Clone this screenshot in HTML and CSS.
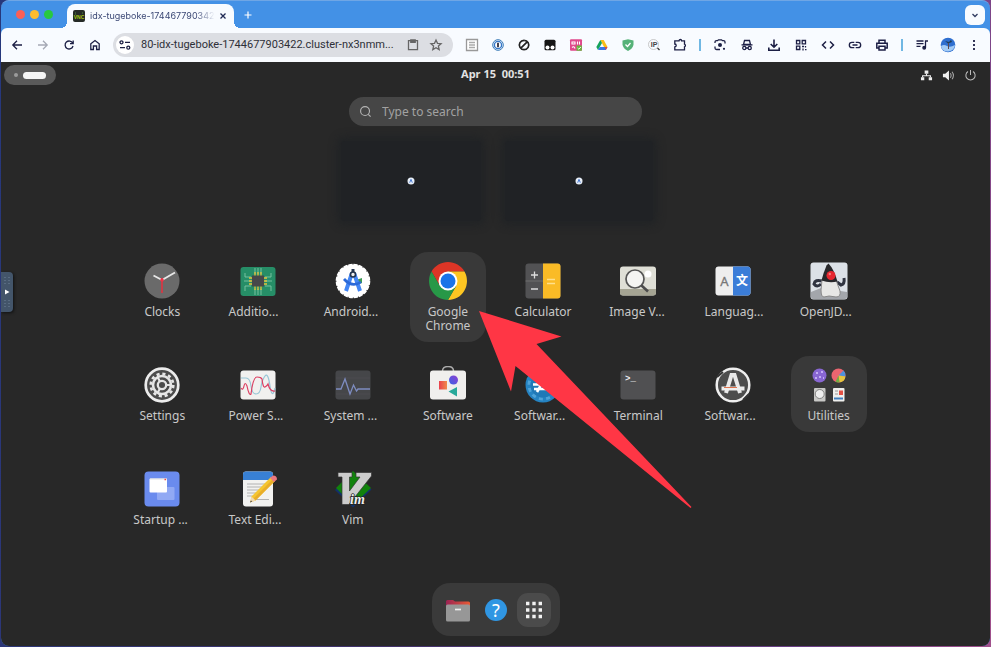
FILE: index.html
```html
<!DOCTYPE html>
<html lang="en">
<head>
<meta charset="utf-8">
<title>idx-tugeboke-1744677903422</title>
<link rel="stylesheet" href="styles.css">
</head>
<body>
<div class="window">
  <header class="tabstrip">
    <div class="lights"><i class="red"></i><i class="amber"></i><i class="green"></i></div>
    <div class="tab">
      <svg class="favicon" viewBox="0 0 12 12"><rect width="12" height="12" rx="2" fill="#252a26"/><path d="M2.500 2v3M9.500 2v2" stroke="#3a5a35" stroke-width="1"/><text x="6" y="8.500" text-anchor="middle" font-family="Liberation Sans" font-weight="bold" font-size="5" fill="#a9c713">VNC</text></svg>
      <span class="tab-title">idx-tugeboke-174467790342</span>
      <button class="tab-btn" aria-label="Close tab"><svg viewBox="0 0 10 10"><path d="M2.500 2.500l5 5M7.500 2.500l-5 5" stroke="#202a55" stroke-width="1.300"/></svg></button>
    </div>
    <button class="tab-btn new" aria-label="New tab"><svg viewBox="0 0 10 10"><path d="M5 1.500v7M1.500 5h7" stroke="#fff" stroke-width="1.200"/></svg></button>
    <button class="tab-search" aria-label="Search tabs"><svg viewBox="0 0 10 10"><path d="M2.500 4l2.500 2.500L7.500 4" fill="none" stroke="#303a60" stroke-width="1.300"/></svg></button>
  </header>

  <nav class="toolbar">
    <div class="group">
      <button aria-label="Back"><svg viewBox="0 0 16 16"><path d="M13 8H4M8 3.800L3.800 8 8 12.200"/></svg></button>
      <button aria-label="Forward" class="dim"><svg viewBox="0 0 16 16"><path d="M3 8h9M8 3.800L12.200 8 8 12.200"/></svg></button>
      <button aria-label="Reload"><svg viewBox="0 0 16 16"><path d="M11.700 6.200A4 4 0 1 0 12 9M12.200 3.500v3.200H9"/></svg></button>
      <button aria-label="Home"><svg viewBox="0 0 16 16"><path d="M3.800 12.500V6.800L8 3.500l4.200 3.300v5.700H9.600V9H6.400v3.500z"/></svg></button>
    </div>
    <div class="address">
      <button class="site" aria-label="Site information"><svg viewBox="0 0 16 16"><circle cx="4.500" cy="5.300" r="1.500"/><path d="M8 5.300h5M3 10.700h5"/><circle cx="11.300" cy="10.700" r="1.500"/></svg></button>
      <input class="url" aria-label="Address" value="80-idx-tugeboke-1744677903422.cluster-nx3nmm...">
      <button class="grey" aria-label="Clipboard"><svg viewBox="0 0 16 16"><path d="M3.500 3.700h9v9h-9z"/><path d="M5.800 3h4.400v2.400H5.800z" fill="#666"/></svg></button>
      <button class="grey" aria-label="Bookmark"><svg viewBox="0 0 16 16"><path d="M8 3l1.500 3.300 3.600.400-2.700 2.400.800 3.500L8 10.800l-3.200 1.800.800-3.500-2.700-2.400 3.600-.400z"/></svg></button>
    </div>
    <div class="group ext">
      <button aria-label="Reader"><svg viewBox="0 0 16 16"><path d="M2.500 2.500h11v11h-11z" stroke="#999" fill="#fff"/><path d="M5 5.500h6M5 8h6M5 10.500h6" stroke="#aaa"/></svg></button>
      <button aria-label="Password manager"><svg viewBox="0 0 16 16"><circle cx="8" cy="8" r="5.300" stroke="#3477b5" fill="#fff" stroke-width="1"/><circle cx="8" cy="8" r="3.600" stroke="#3477c9" stroke-width="1.400"/><path d="M8 5.800v4.400" stroke="#223" stroke-width="1.700"/></svg></button>
      <button aria-label="Blocker"><svg viewBox="0 0 16 16"><path d="M8 3.300a4.700 4.700 0 1 0 .1 0M4.800 11.200l6.400-6.400" stroke="#222" stroke-width="1.700"/></svg></button>
      <button aria-label="Tampermonkey"><svg viewBox="0 0 16 16"><rect x="2.500" y="2.800" width="11" height="10.500" rx="1.500" fill="#161616" stroke="none"/><circle cx="5.500" cy="10.500" r="2" fill="#fff" stroke="none"/><circle cx="10.500" cy="10.500" r="2" fill="#fff" stroke="none"/></svg></button>
      <button aria-label="Translator"><svg viewBox="0 0 16 16"><rect x="2" y="2.300" width="12" height="11.500" rx="1" fill="#e0488c" stroke="none"/><path d="M4 5h3v2H4zM9.500 4.500v3M11.500 4.500v3M4 10.500q2-2 3 1" stroke="#fff" stroke-width="1.100"/><path d="M8.500 8.500h5.300v5.200H8.500z" fill="#67b83f" stroke="none"/><path d="M9.600 11l1.200 1.200L12.800 10" stroke="#fff" stroke-width="1"/></svg></button>
      <button aria-label="Drive"><svg viewBox="0 0 16 16" class="solid"><path d="M6.300 3h3.400L13.500 10H10z" fill="#f9bd18"/><path d="M6.300 3L8 6l-4 7-1.700-3z" fill="#15a25c"/><path d="M5.700 10h7.800l-1.700 3H4z" fill="#3878e8"/><path d="M10.800 10h2.700l-1.700 3z" fill="#e64639"/></svg></button>
      <button aria-label="Shield"><svg viewBox="0 0 16 16"><path d="M8 2.300l5.500 1.300v4.200Q12.500 12 8 14 3.500 12 2.500 7.800V3.600z" fill="#56b278" stroke="none"/><path d="M5.500 7.500L7.500 9.500l3-3.500" stroke="#fff" stroke-width="1.300"/></svg></button>
      <button aria-label="IP lookup"><svg viewBox="0 0 16 16"><circle cx="7.500" cy="7.500" r="5" stroke="#bbb" stroke-width=".8"/><text class="ip" x="8" y="10" text-anchor="middle" font-family="Liberation Sans" font-weight="bold" font-size="7">IP</text><path d="M11.500 11l2 2" stroke="#333"/></svg></button>
      <button aria-label="Extensions"><svg viewBox="0 0 16 16"><path d="M2.800 3.800H7a1.300 1.300 0 0 1 2.600 0h2.900v3.400a1.400 1.400 0 0 1 0 2.600v3.100H2.800V9.800a1.400 1.400 0 0 0 0-2.800z"/></svg></button>
    </div>
    <span class="sep"></span>
    <div class="group tools">
      <button aria-label="Lens"><svg viewBox="0 0 16 16"><path d="M3 6V5q0-1.300 1.500-1.300h1L6.500 2.800h3l1 .900h1Q13 3.700 13 5v1.500M3 9.500V11q0 1.500 1.500 1.500H8"/><circle cx="8" cy="8" r="2" fill="#1c1f45" stroke="none"/><circle cx="12" cy="11.800" r="1.100" fill="#1c1f45" stroke="none"/></svg></button>
      <button aria-label="Incognito"><svg viewBox="0 0 16 16"><path d="M5.500 3.500h5l1 4h-7z"/><path d="M2.500 7.800h11M7 11h2"/><circle cx="5.300" cy="11" r="1.600"/><circle cx="10.700" cy="11" r="1.600"/></svg></button>
      <button aria-label="Downloads"><svg viewBox="0 0 16 16"><path d="M8 2.500v7.300M4.700 7L8 10.200 11.300 7M2.800 10.500V13.300h10.400v-2.800" stroke-width="1.600"/></svg></button>
      <button aria-label="QR code"><svg viewBox="0 0 16 16"><path d="M3.500 3.500h3.300v3.300H3.500zM9.200 3.500h3.300v3.300H9.200zM3.500 9.200h3.300v3.300H3.500z"/><path d="M9 9.500h2M12.500 9v1.500M10 11.500v2M12 12.700h1.500"/></svg></button>
      <button aria-label="Developer tools"><svg viewBox="0 0 16 16"><path d="M6 4.500L2.500 8 6 11.500M10 4.500L13.500 8 10 11.500" stroke-width="1.500"/></svg></button>
      <button aria-label="Copy link"><svg viewBox="0 0 16 16"><path d="M7.300 5.300H5a2.700 2.700 0 0 0 0 5.400h2.300M8.700 5.300H11a2.700 2.700 0 0 1 0 5.400H8.700M5.500 8h5"/></svg></button>
      <button aria-label="Print"><svg viewBox="0 0 16 16"><path d="M5 6V3.200h6V6M5 11H2.800V6.300h10.400V11H11M5 9.300h6v3.700H5z" stroke-width="1.500"/></svg></button>
    </div>
    <span class="sep"></span>
    <div class="group end">
      <button aria-label="Media"><svg viewBox="0 0 16 16"><path d="M2.500 4h7M2.500 6.700h7M2.500 9.400h4M11.500 10.500V4H14"/><circle cx="10.200" cy="10.800" r="1.300" fill="#1c1f45"/></svg></button>
      <button aria-label="Profile"><svg viewBox="0 0 16 16" class="solid"><circle cx="8" cy="8" r="7.300" fill="#2f6fd0"/><path d="M1 9q3-2 6 0t8-1A7.300 7.300 0 0 1 1.500 11z" fill="#a3cbf5"/><path d="M5 4l4 1 2-2 1 2-4 1.500z" fill="#1f3d55"/><path d="M8 6h1v6H8z" fill="#5b4a50"/></svg></button>
      <button aria-label="Menu"><svg viewBox="0 0 16 16"><path d="M8 3v2M8 7v2M8 11v2" stroke-width="1.800"/></svg></button>
    </div>
  </nav>

  <main class="desktop">
    <div class="topbar">
      <button class="activities" aria-label="Activities"><i></i><b></b></button>
      <time>Apr 15&nbsp; 00:51</time>
      <div class="status">
        <svg viewBox="0 0 14 14"><path d="M5 1.500h4v3.500H5zM1 9h3.600v3H1zM9.400 9H13v3H9.400z" fill="#eee"/><path d="M7 5v2.200M2.800 9V7.200h8.400V9" fill="none" stroke="#eee" stroke-width="1.200"/></svg>
        <svg viewBox="0 0 14 14"><path d="M1 5h2.500L7.500 1.500v11L3.500 9H1z" fill="#eee"/><path d="M9 4.500q1.600 2.500 0 5M10.800 3q3 4 0 8" fill="none" stroke="#aaa" stroke-width="1.100"/></svg>
        <svg viewBox="0 0 14 14"><path d="M4.300 2.700a5 5 0 1 0 5.400 0M7 1v5.500" fill="none" stroke="#bbb" stroke-width="1.100"/></svg>
      </div>
    </div>

    <label class="search">
      <svg viewBox="0 0 14 14"><circle cx="6.500" cy="6.500" r="4.800"/><path d="M10 10l2.500 2.500"/></svg>
      <input type="text" placeholder="Type to search" aria-label="Search">
    </label>

    <div class="workspaces">
      <div class="space"><svg viewBox="0 0 8 8"><circle cx="4" cy="4" r="3.500" fill="#e7eef8"/><path d="M2.700 5.700L4 2.300l1.300 3.400" fill="none" stroke="#4b7bd0"/></svg></div>
      <div class="space"><svg viewBox="0 0 8 8"><circle cx="4" cy="4" r="3.500" fill="#e7eef8"/><path d="M2.700 5.700L4 2.300l1.300 3.400" fill="none" stroke="#4b7bd0"/></svg></div>
    </div>

    <div class="apps">
      <button class="app"><svg viewBox="0 0 38 38"><circle cx="19" cy="19" r="17.500" fill="#6a6a6a"/><path d="M19 18l13-7.500M19 18l-8.500-4.500" stroke="#e8e8e8" stroke-width="1.900"/><path d="M19 16v15" stroke="#d93743" stroke-width="1.700"/><circle cx="19" cy="18" r="1.800" fill="#ee3347"/></svg><span>Clocks</span></button>
      <button class="app cut"><svg viewBox="0 0 38 38"><rect x="1.500" y="5" width="35" height="29" rx="3" fill="#268e67"/><path d="M16 6v6M19 6v6M22 6v6M16 27v6M19 27v6M22 27v6M6 11v4h6M5 19h7M6 29v-5h6M32 11v4h-6M33 19h-7M32 29v-5h-6" fill="none" stroke="#7fc6a5" stroke-width=".9"/><path d="M16 10v18M19 10v18M22 10v18M10 16h18M10 19h18M10 22h18" stroke="#e4c23c" stroke-width="1.300"/><rect x="13" y="13.500" width="12" height="11" fill="#47484a"/></svg><span>Additio...</span></button>
      <button class="app cut"><svg viewBox="0 0 38 38"><circle cx="19" cy="19" r="16.500" fill="#fff"/><circle cx="19" cy="19" r="16.300" fill="none" stroke="#fff" stroke-width="2" stroke-dasharray="4.100 1.020"/><path d="M22 18l6-2v5l-3 1z" fill="#3c9a54"/><path d="M18 11l-6 18M20 11l6 18" stroke="#4285f4" stroke-width="4"/><path d="M10 17q8 9 17 3" fill="none" stroke="#2b69d8" stroke-width="2.700"/><circle cx="19" cy="12.500" r="2.500" fill="#eee" stroke="#23344d" stroke-width="1.600"/><path d="M19 7v3" stroke="#23344d" stroke-width="3"/></svg><span>Android...</span></button>
      <div class="slot">
        <button class="app tile"><svg viewBox="0 0 38 38"><path d="M2.550 9.500A19 19 0 0 1 35.450 9.500H19L10.770 23.750z" fill="#dc3526"/><path d="M35.450 9.500A19 19 0 0 1 19 38L27.230 23.750 19 9.500z" fill="#fdc622"/><path d="M19 38A19 19 0 0 1 2.550 9.500L10.770 23.750H27.230z" fill="#279847"/><circle cx="19" cy="19" r="9.500" fill="#fff"/><circle cx="19" cy="19" r="7.500" fill="#1a73e8"/></svg><span>Google Chrome</span></button>
        <svg class="arrow" viewBox="0 0 214 198"><path d="M1 1l82.500 25.500L58.500 34l155 163-1 1L37.500 56 33 81.500z" fill="#ff3645"/></svg>
      </div>
      <button class="app"><svg viewBox="0 0 38 38"><rect x="1.500" y="1.500" width="35" height="35" rx="3" fill="#525254"/><path d="M19 1.500h14.500a3 3 0 0 1 3 3v29a3 3 0 0 1-3 3H19z" fill="#fabb26"/><path d="M1.500 19H19" stroke="#777" stroke-width=".8"/><path d="M10.500 9.500v7M7 13h7M7 27h7" stroke="#ddd" stroke-width="1.300"/><path d="M23 17.500h8M23 21.500h8" stroke="#ffe08c" stroke-width="1.400"/></svg><span>Calculator</span></button>
      <button class="app cut"><svg viewBox="0 0 38 38"><rect x="1" y="4.500" width="36" height="29" rx="3" fill="#dfdfd6"/><path d="M1 27h36v3.500a3 3 0 0 1-3 3H4a3 3 0 0 1-3-3z" fill="#a5a493"/><circle cx="29" cy="12" r="3.500" fill="#fff"/><circle cx="16" cy="17" r="9" fill="#f4f4f2" stroke="#555" stroke-width="1.700"/><path d="M22.500 23.500l6.500 6" stroke="#4b4b4b" stroke-width="2.600"/></svg><span>Image V...</span></button>
      <button class="app cut"><svg viewBox="0 0 38 38"><rect x="1.500" y="4.500" width="35" height="29" rx="3" fill="#eee"/><path d="M19 4.500h14.500a3 3 0 0 1 3 3v23a3 3 0 0 1-3 3H19z" fill="#3b7dd8"/><text x="10.500" y="24" text-anchor="middle" font-family="Noto Sans" font-size="13" fill="#777" stroke="#777" stroke-width=".3">A</text><text x="28" y="23" text-anchor="middle" font-family="Noto Sans CJK SC" font-size="12" font-weight="bold" fill="#fff">文</text></svg><span>Languag...</span></button>
      <button class="app cut"><svg viewBox="0 0 38 38"><rect x=".5" y=".5" width="37" height="37" rx="3" fill="#dce1e7"/><path d="M1 30l10-4 26 4v5q0 2-2 2H3q-2 0-2-2z" fill="#a3a6ab"/><path d="M12 19q-7-2-8 3 3 4 7 0M27 20l4 3q4-1 3-7" fill="none" stroke="#2f3340" stroke-width="3"/><path d="M12 18L11 28q0 7 3 7l5-1 7 1q5 0 4-6l-4-11z" fill="#e7e7e5" stroke="#888"/><path d="M18.500 1.500q5 5 9 18-8 2-16-1 2-8 5-15z" fill="#28282b"/><circle cx="21" cy="13.500" r="4.500" fill="#e62630"/><circle cx="19.800" cy="12" r="1.200" fill="#f37b7b"/></svg><span>OpenJD...</span></button>

      <button class="app"><svg viewBox="0 0 38 38"><circle cx="19" cy="19" r="16.300" fill="#4c4c4c" stroke="#ececec" stroke-width="2.700"/><circle cx="19" cy="19" r="11.300" fill="none" stroke="#e6e6e6" stroke-width="2.600" stroke-dasharray="3.100 2.817"/><circle cx="19" cy="19" r="9" fill="none" stroke="#e6e6e6" stroke-width="2.600"/><circle cx="19" cy="19" r="4.200" fill="none" stroke="#e6e6e6" stroke-width="2.300"/><path d="M23 19h5M17 22.500l-2.500 4.500M17 15.500L14.500 11" stroke="#e6e6e6" stroke-width="2.200"/></svg><span>Settings</span></button>
      <button class="app cut"><svg viewBox="0 0 38 38"><rect x="1.500" y="4.500" width="35" height="29" rx="3" fill="#f1f0ef"/><path d="M2 12h5q4 0 5 8t5 8 5-7 4-11 5 10 5 2" fill="none" stroke="#98c6d7" stroke-width="1.200"/><path d="M2 22q2 3 3-2t3 0q2 10 4 8 2-17 6-17t5 2q1 9 3 8t3-3q2 8 7 7" fill="none" stroke="#dc3f62" stroke-width="1.200"/></svg><span>Power S...</span></button>
      <button class="app cut"><svg viewBox="0 0 38 38"><rect x="1.500" y="4.500" width="35" height="29" rx="3" fill="#454649"/><path d="M2 28h34M2 12h34" stroke="#515257" stroke-width=".5"/><path d="M2 23h5l4-10 5 15 3.500-9 3 6 1.500-2h12" fill="none" stroke="#7e8cc0" stroke-width="1.300"/></svg><span>System ...</span></button>
      <button class="app"><svg viewBox="0 0 38 38"><path d="M13.500 5q0-4.500 5.500-4.500T24.500 5" fill="none" stroke="#aaa" stroke-width="1.400"/><rect x="1" y="4.500" width="36" height="29" rx="3" fill="#f0efed"/><defs><linearGradient id="sq"><stop stop-color="#e9404c"/><stop offset="1" stop-color="#f08a4a"/></linearGradient><linearGradient id="ci" x1="0" y1="1" x2="1" y2="0"><stop stop-color="#3d62e5"/><stop offset="1" stop-color="#8e3fd0"/></linearGradient></defs><rect x="10" y="15" width="8" height="8.500" fill="url(#sq)"/><circle cx="24.500" cy="14" r="4.500" fill="url(#ci)"/><path d="M28 21v9.500l-8.500-5z" fill="#28a99a"/></svg><span>Software</span></button>
      <button class="app cut"><svg viewBox="0 0 38 38"><circle cx="19" cy="19" r="17.500" fill="#2583c2"/><circle cx="19" cy="19" r="14" fill="none" stroke="#4fa3d8" stroke-width="3" stroke-dasharray="4 3.330"/><circle cx="19" cy="19" r="12.500" fill="#2079b7"/><path d="M9 18.500h19M10 23h15M13 26l8-14" stroke="#fff" stroke-width="2.600"/></svg><span>Softwar...</span></button>
      <button class="app"><svg viewBox="0 0 38 38"><rect x="1.500" y="4.500" width="35" height="29" rx="3" fill="#505052"/><text x="6" y="15" font-family="Liberation Mono" font-weight="bold" font-size="9" fill="#eee">&gt;_</text></svg><span>Terminal</span></button>
      <button class="app cut"><svg viewBox="0 0 38 38"><circle cx="19" cy="19" r="16.300" fill="#4d4d4d" stroke="#eee" stroke-width="2.500"/><path d="M3 11l6-5M29 34l6-6" stroke="#333" stroke-width="2"/><path d="M12 27L17.500 9h3L26 27" fill="none" stroke="#e9e9e9" stroke-width="4"/><path d="M7.500 22.500h23" stroke="#eee" stroke-width="4"/><path d="M10 21.500h13" stroke="#df734d" stroke-width="1"/></svg><span>Softwar...</span></button>
      <button class="app tile"><svg viewBox="0 0 38 38"><circle cx="9.500" cy="9.500" r="7" fill="#8866d2"/><path d="M6 7h2M11 6h2M9 11h2M5 12h2M13 12h1" stroke="#d6c5ff" stroke-width="1.600"/><circle cx="28.500" cy="9.500" r="7" fill="#eb6570"/><path d="M28.500 9.500l5-5a7 7 0 0 1 2 6z" fill="#4e91dd"/><path d="M28.500 9.500l7 1a7 7 0 0 1-6 6z" fill="#e6c53f"/><path d="M28.500 9.500l1 7a7 7 0 0 1-4-.700z" fill="#74ad45"/><rect x="4" y="22" width="11.500" height="13.500" rx="1" fill="#c8c8c6"/><circle cx="9.700" cy="28" r="4.500" fill="#eee" stroke="#777" stroke-width=".9"/><rect x="23" y="22" width="11.500" height="13.500" rx="1" fill="#efefed"/><path d="M25 25h3M25 28h3" stroke="#999"/><path d="M29 24.500h4v4.500h-4z" fill="#e35045"/><path d="M24 32.500h9" stroke="#417fbe" stroke-width="2"/></svg><span>Utilities</span></button>

      <button class="app cut"><svg viewBox="0 0 38 38"><rect x="1.500" y="1.500" width="35" height="35" rx="4" fill="#6a8bee"/><rect x="14" y="17" width="17.500" height="13" rx="1" fill="#91a9f4"/><rect x="6.500" y="8.500" width="17.500" height="14" rx="1" fill="#fff"/><path d="M7 9h17" stroke="#ddd"/><path d="M21.500 9.500h1.500" stroke="#e44" stroke-width="1.300"/></svg><span>Startup ...</span></button>
      <button class="app cut"><svg viewBox="0 0 38 38"><rect x="4" y="1.500" width="30" height="35" rx="3" fill="#f2f2f0"/><path d="M4 10V4.500a3 3 0 0 1 3-3h24a3 3 0 0 1 3 3V10z" fill="#3880d4"/><path d="M8 14h18M8 17h16M8 20h13M8 23h11M8 26h7M17 29.500h13" stroke="#aaa" stroke-width=".9"/><path d="M12.500 26.500L32 7l4 4-19.500 19.500-5.500 2z" fill="#f5c530"/><path d="M16.500 30.500L36 11l-2-2-19.500 19.500z" fill="#e9ae28"/><path d="M12.500 26.500l4 4-5.500 2z" fill="#efd9b3"/><path d="M31 8l3-2.500q4 0 4 4L35 12z" fill="#e97880"/><path d="M11 32.500l1-2 1 1z" fill="#222"/></svg><span>Text Edi...</span></button>
      <button class="app"><svg viewBox="0 0 38 38"><path d="M19 2.500L37.500 19.500 19 37.500 1 20z" fill="#11306b"/><path d="M19 1L37 18 19 35 2 18z" fill="#11820c"/><path d="M4 2.500h14v4.500h-2.500v14L26 7h-4V2.500h15.500v3.500L15 34.500H8V7H4z" fill="#ccc" stroke="#333" stroke-width=".7"/><text x="16" y="34" font-family="Liberation Serif" font-style="italic" font-weight="bold" font-size="14" fill="#eee" stroke="#222" stroke-width="1.500" paint-order="stroke">im</text></svg><span>Vim</span></button>
    </div>

    <footer class="dock">
      <button aria-label="Files"><svg viewBox="0 0 26 26"><defs><linearGradient id="fo"><stop stop-color="#9b2354"/><stop offset="1" stop-color="#e95a34"/></linearGradient></defs><path d="M1 8V4.500Q1 3 2.500 3H8l2 1.500h13.500Q25 4.500 25 6v5H1z" fill="url(#fo)"/><rect x="1" y="7.500" width="24" height="17" rx="1.500" fill="#979797"/><path d="M10 12.500h6" stroke="#eee" stroke-width="1.700"/></svg></button>
      <button aria-label="Help"><svg viewBox="0 0 26 26"><circle cx="13" cy="13" r="11" fill="#3096e3"/><text x="13" y="19.500" text-anchor="middle" font-family="Noto Sans" font-size="18" fill="#fff">?</text></svg></button>
      <button class="active" aria-label="Show applications"><svg viewBox="0 0 26 26"><path d="M5 6.500h3.400M11.300 6.500h3.400M17.600 6.500H21M5 13h3.400M11.300 13h3.400M17.600 13H21M5 19.500h3.400M11.300 19.500h3.400M17.600 19.500H21" stroke="#f2f2f2" stroke-width="3.400"/></svg></button>
    </footer>

    <button class="handle" aria-label="Show controls"><svg viewBox="0 0 12 40"><path d="M4 5v8M8 5v8M4 28v8M8 28v8" stroke="#71849a" stroke-dasharray="1 2"/><path d="M4 17.500l4.500 2.500L4 22.500z" fill="#fff"/></svg></button>
  </main>
</div>
</body>
</html>
```
FILE: styles.css
```css
* { box-sizing: border-box; }

body {
  margin: 0;
  min-height: 100vh;
  display: flex;
  padding: 0 1px 1px;
  background: linear-gradient(100deg, #26387c 0%, #41316a 45%, #6b3f86 85%, #a0508c 100%);
  font-family: "Noto Sans", sans-serif;
}

button {
  border: 0;
  padding: 0;
  background: none;
  color: inherit;
  font: inherit;
}

svg { display: block; }

.window {
  flex: 1;
  min-width: 0;
  display: flex;
  flex-direction: column;
  border-radius: 8px;
  overflow: hidden;
  background: #4391e6;
  border-top: 1px solid #6fa6e5;
}

/* Tab strip */
.tabstrip {
  display: flex;
  align-items: center;
  height: 27px;
  padding: 0 5px 0 15px;
}

.lights { display: flex; gap: 5px; margin-right: 14px; }
.lights i { width: 9px; height: 9px; border-radius: 50%; }
.red { background: #fb5f57; }
.amber { background: #fdbc2e; }
.green { background: #28c840; }

.tab {
  position: relative;
  align-self: flex-end;
  display: flex;
  align-items: center;
  width: 167px;
  height: 24px;
  padding: 0 6px;
  border-radius: 8px 8px 0 0;
  background: #f8fbff;
}
.tab::before,
.tab::after {
  content: "";
  position: absolute;
  bottom: 0;
  width: 6px;
  height: 6px;
}
.tab::before { right: 100%; background: radial-gradient(circle at 0 0, transparent 6px, #f8fbff 6px); }
.tab::after { left: 100%; background: radial-gradient(circle at 100% 0, transparent 6px, #f8fbff 6px); }

.favicon { flex: none; width: 12px; height: 12px; margin-right: 5px; }

.tab-title {
  flex: 1;
  white-space: nowrap;
  font: 9px/14px Inter, sans-serif;
  color: #3b4875;
  -webkit-mask-image: linear-gradient(90deg, #000 85%, transparent);
  mask-image: linear-gradient(90deg, #000 85%, transparent);
}

.tab-btn { flex: none; width: 10px; height: 10px; margin-left: 3px; }
.tab-btn.new { margin-left: 9px; }

.tab-search {
  display: grid;
  place-items: center;
  width: 20px;
  height: 20px;
  margin-left: auto;
  border-radius: 6px;
  background: #f8fbff;
}
.tab-search svg { width: 10px; height: 10px; }

/* Toolbar */
.toolbar {
  display: flex;
  align-items: center;
  height: 34px;
  padding: 0 8px;
  border-radius: 6px 6px 0 0;
  background: #f8fbff;
}
.toolbar svg {
  width: 16px;
  height: 16px;
  fill: none;
  stroke: #1c1f45;
  stroke-width: 1.3;
}
.toolbar svg.solid { stroke: none; }
.toolbar .dim svg { stroke: #a5a9b5; }
.toolbar .grey svg { stroke: #666; }
.ip { fill: #444; stroke: none; }

.group { display: flex; flex: none; gap: 10px; }
.tools { gap: 11px; }
.sep { flex: none; width: 2px; height: 12px; margin: 0 11px; background: #70b7e3; }

.address {
  flex: 1;
  min-width: 0;
  display: flex;
  align-items: center;
  gap: 7px;
  height: 24px;
  margin: 0 11px 0 10px;
  padding: 0 9px 0 3px;
  border-radius: 12px;
  background: #dcdee3;
}
.site {
  display: grid;
  place-items: center;
  flex: none;
  width: 18px;
  height: 18px;
  border-radius: 50%;
  background: #fff;
}
.url {
  flex: 1;
  min-width: 0;
  padding: 0;
  border: 0;
  background: none;
  font: 11px/16px Roboto, sans-serif;
  color: #2e3038;
}

/* Remote desktop */
.desktop {
  position: relative;
  flex: 1;
  display: flex;
  flex-direction: column;
  align-items: center;
  padding-bottom: 10px;
  background: #282828;
  color: #c8c8c8;
}

.topbar {
  align-self: stretch;
  display: grid;
  grid-template-columns: 1fr auto 1fr;
  align-items: center;
  height: 26px;
  padding: 0 3px;
}
.topbar time { font-size: 11px; line-height: 14px; padding-bottom: 2px; font-weight: 700; color: #e2e2e2; }

.activities {
  display: flex;
  align-items: center;
  gap: 5px;
  width: 52px;
  height: 20px;
  padding: 0 10px;
  border-radius: 10px;
  background: #5a5a5a;
}
.activities i { width: 4px; height: 4px; border-radius: 2px; background: #9b9b9b; }
.activities b { flex: 1; height: 7px; border-radius: 4px; background: #f5f5f5; }

.status { display: flex; justify-content: flex-end; gap: 9px; padding-right: 10px; }
.status svg { width: 13px; height: 13px; }

.search {
  display: flex;
  align-items: center;
  gap: 10px;
  width: 293px;
  height: 29px;
  margin-top: 9px;
  padding: 0 10px;
  border-radius: 15px;
  background: #464646;
}
.search svg { width: 13px; height: 13px; fill: none; stroke: #b5b5b5; stroke-width: 1.2; }
.search input {
  flex: 1;
  min-width: 0;
  padding: 0;
  border: 0;
  background: none;
  font: 12px/16px "Noto Sans", sans-serif;
  color: #ddd;
}
.search input::placeholder { color: #a2a2a2; opacity: 1; }

.workspaces {
  display: flex;
  gap: 24px;
  height: 80px;
  margin-top: 15px;
  padding-left: 2px;
}
.space {
  display: grid;
  place-items: center;
  width: 148px;
  border-radius: 4px;
  background: #202225;
  box-shadow: 0 0 7px 5px #222426;
}
.space:first-child { width: 140px; }
.space svg { width: 8px; height: 8px; }

/* Application grid */
.apps {
  display: grid;
  grid-template-columns: repeat(8, 1fr);
  grid-auto-rows: 76px;
  row-gap: 28px;
  justify-items: center;
  align-items: start;
  width: 77%;
  margin-top: 31px;
}
.slot { position: relative; }

.app {
  display: flex;
  flex-direction: column;
  align-items: center;
  gap: 5px;
  width: 76px;
  padding: 10px 9px 9px;
  font-size: 12px;
  line-height: 14px;
}
.app svg { width: 38px; height: 38px; }
.app span { text-align: center; }
.cut span { width: 58px; text-align: left; white-space: nowrap; }
.tile { border-radius: 18px; background: #393939; }

.arrow {
  position: absolute;
  z-index: 1;
  left: 68px;
  top: 58px;
  width: 214px;
  height: 198px;
  pointer-events: none;
}

/* Dock */
.dock {
  display: flex;
  align-items: center;
  gap: 4px;
  height: 53px;
  margin-top: auto;
  padding: 0 9px;
  border-radius: 18px;
  background: #3a3a3a;
}
.dock button {
  display: grid;
  place-items: center;
  width: 34px;
  height: 34px;
  border-radius: 11px;
}
.dock svg { width: 26px; height: 26px; }
.dock .active { background: #4b4b4b; }

.handle {
  position: absolute;
  left: 0;
  top: 36%;
  width: 12px;
  height: 40px;
  border-radius: 0 4px 4px 0;
  background: #43556a;
  box-shadow: 1px 1px 3px #111;
}
.handle svg { width: 12px; height: 40px; }
```
